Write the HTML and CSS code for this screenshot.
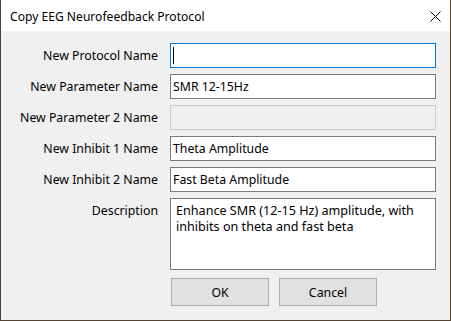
FILE: index.html
```html
<!DOCTYPE html>
<html lang="en">
<head>
    <meta charset="UTF-8">
    <title>Copy EEG Neurofeedback Protocol</title>
    <link rel="stylesheet" href="styles.css">
</head>
<body>

<div class="dialog">
    <!-- Title bar -->
    <div class="title-bar">
        <span class="title-text">Copy EEG Neurofeedback Protocol</span>
        <svg class="close-icon" width="11" height="11" viewBox="0 0 11 11">
            <path d="M0.5 0.5 L10.5 10.5 M10.5 0.5 L0.5 10.5" stroke="#000" stroke-width="1" fill="none"/>
        </svg>
    </div>

    <div class="dialog-body">
        <div class="form-grid">
            <label class="field-label">New Protocol Name</label>
            <div class="text-box focused"><span class="caret"></span></div>

            <label class="field-label">New Parameter Name</label>
            <div class="text-box">SMR 12-15Hz</div>

            <label class="field-label">New Parameter 2 Name</label>
            <div class="text-box disabled"></div>

            <label class="field-label">New Inhibit 1 Name</label>
            <div class="text-box">Theta Amplitude</div>

            <label class="field-label">New Inhibit 2 Name</label>
            <div class="text-box">Fast Beta Amplitude</div>

            <label class="field-label top">Description</label>
            <div class="text-area">Enhance SMR (12-15 Hz) amplitude, with inhibits on theta and fast beta</div>

            <div></div>
            <div class="button-row">
                <button class="dlg-button">OK</button>
                <button class="dlg-button">Cancel</button>
            </div>
        </div>
    </div>
</div>

</body>
</html>
```

FILE: styles.css
```css
body {
    margin: 0;
    padding: 0;
    font-family: "Noto Sans", sans-serif;
    font-size: 12.3px;
    color: #000;
    background-color: #fff;
}
.dialog {
    width: 451px;
    height: 321px;
    box-sizing: border-box;
    border: 1px solid #4f4331;
    border-top: none;
    background-color: #f0f0f0;
    display: flex;
    flex-direction: column;
}
.title-bar {
    height: 31px;
    background-color: #fff;
    display: flex;
    align-items: center;
    justify-content: space-between;
    padding: 0 9px 0 9px;
    flex-shrink: 0;
}
.title-text {
    font-size: 12.1px;
    padding-top: 1px;
}
.close-icon {
    margin-top: 1px;
}
.dialog-body {
    padding-top: 12px;
}
.form-grid {
    display: grid;
    grid-template-columns: 157px 266px;
    column-gap: 12px;
    row-gap: 6px;
}
.field-label {
    text-align: right;
    align-self: center;
    white-space: nowrap;
}
.field-label.top {
    align-self: start;
    padding-top: 4px;
}
.text-box {
    height: 25px;
    box-sizing: border-box;
    border: 1px solid #7a7a7a;
    background-color: #fff;
    padding: 0 2px;
    display: flex;
    align-items: center;
    white-space: nowrap;
}
.text-box.focused {
    border-color: #0078d7;
}
.text-box.disabled {
    border-color: #cccccc;
    background-color: #f0f0f0;
}
.caret {
    display: block;
    width: 1px;
    height: 17px;
    background-color: #000;
}
.text-area {
    height: 72px;
    box-sizing: border-box;
    border: 1px solid #7a7a7a;
    background-color: #fff;
    padding: 4px 8px 0 5px;
    line-height: 16px;
    font-size: 12.6px;
}
.button-row {
    display: flex;
    gap: 10px;
    margin-top: 2px;
    padding-left: 1px;
}
.dlg-button {
    width: 98px;
    height: 28px;
    box-sizing: border-box;
    border: 1px solid #adadad;
    background-color: #e1e1e1;
    font-family: "Noto Sans", sans-serif;
    font-size: 12.3px;
    color: #000;
    padding: 0;
}
```
